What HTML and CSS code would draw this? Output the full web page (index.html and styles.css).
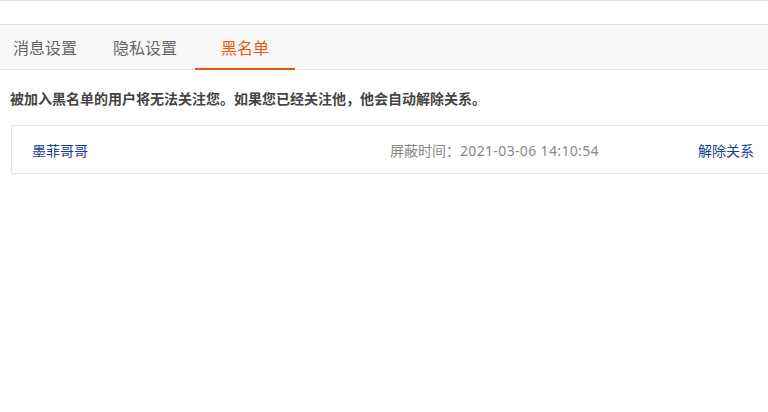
FILE: index.html
```html
<!DOCTYPE html>
<html lang="zh-CN">
<head>
<meta charset="utf-8">
<title>黑名单</title>
<link rel="stylesheet" href="styles.css">
</head>
<body>
<div class="page">
  <div class="topbar"></div>
  <nav class="tabs">
    <a class="tab">消息设置</a>
    <a class="tab">隐私设置</a>
    <a class="tab active">黑名单</a>
  </nav>
  <p class="notice">被加入黑名单的用户将无法关注您。如果您已经关注他，他会自动解除关系。</p>
  <div class="list">
    <div class="row">
      <a class="name">墨菲哥哥</a>
      <span class="time">屏蔽时间：<span class="stamp">2021-03-06 14:10:54</span></span>
      <a class="action">解除关系</a>
    </div>
  </div>
</div>
</body>
</html>
```

FILE: styles.css
```css
html, body {
  margin: 0;
  padding: 0;
  background: #fff;
  overflow: hidden;
}
body {
  font-family: "Noto Sans CJK SC", "Microsoft YaHei", sans-serif;
  color: #333;
}
.page {
  width: 768px;
  height: 412px;
  overflow: hidden;
}
.topbar {
  height: 24px;
  border-top: 1px solid #dcdcdc;
  box-sizing: border-box;
}
.tabs {
  display: flex;
  height: 44px;
  background: #f8f8f8;
  border-top: 1px solid #e5e5e5;
  border-bottom: 1px solid #e5e5e5;
  padding-left: 0;
}
.tab {
  width: 100px;
  display: flex;
  align-items: center;
  justify-content: center;
  font-size: 16px;
  color: #666;
  box-sizing: border-box;
}
.tab:first-child {
  margin-left: -5px;
}
.tab.active {
  color: #e8590c;
  border-bottom: 2px solid #e8560f;
  margin-bottom: -1px;
  padding-top: 1px;
}
.notice {
  margin: 0;
  padding: 18px 0 0 10px;
  font-size: 14px;
  font-weight: bold;
  color: #444;
  line-height: 20px;
  height: 37px;
}
.list {
  margin-left: 11px;
  width: 790px;
  border: 1px solid #e5e5e5;
  box-sizing: border-box;
}
.row {
  display: flex;
  align-items: center;
  height: 47px;
  padding-left: 20px;
  font-size: 14px;
}
.name {
  width: 358px;
  color: #1a3f94;
}
.time {
  width: 308px;
  color: #888;
}
.stamp {
  font-family: "Noto Sans", "Noto Sans CJK SC", sans-serif;
  letter-spacing: 0.35px;
}
.action {
  color: #1a3f94;
}
```
